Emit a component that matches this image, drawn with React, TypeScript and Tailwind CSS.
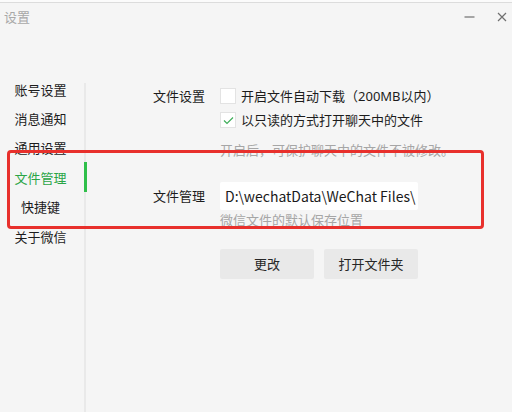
import React from "react";

const font = { fontFamily: '"Noto Sans CJK SC", "Noto Sans", sans-serif' };

const navItems = [
  { id: 1, text: "账号设置" },
  { id: 2, text: "消息通知" },
  { id: 3, text: "通用设置" },
  { id: 4, text: "文件管理", active: true },
  { id: 5, text: "快捷键" },
  { id: 6, text: "关于微信" },
];

const Checkbox: React.FC<{ checked?: boolean }> = ({ checked }) => (
  <div className="w-4 h-4 bg-white border border-[#e3e3e3] flex items-center justify-center">
    {checked && (
      <svg width="11" height="9" viewBox="0 0 11 9" fill="none">
        <path d="M1 4.5 L4 7.5 L10 1.5" stroke="#3fae5a" strokeWidth="1.2" />
      </svg>
    )}
  </div>
);

const App: React.FC = () => {
  return (
    <div
      className="relative w-[512px] h-[412px] overflow-hidden bg-[#f5f5f5] text-[#1c1c1c] text-[13px] leading-[14px]"
      style={font}
    >
      {/* window top edge */}
      <div className="h-[2px] bg-[#fbfbfb]" />
      <div className="h-px bg-[#dcdcdc]" />

      {/* title bar */}
      <div className="h-[27px] flex items-center justify-between pl-[4px] pr-[5px]">
        <span className="text-[13px] text-[#a8a8a8]">设置</span>
        <div className="flex items-center gap-[22px] text-[#707070]">
          <svg width="11" height="11" viewBox="0 0 11 11">
            <path d="M0.5 6 H10.5" stroke="currentColor" strokeWidth="1.2" />
          </svg>
          <svg width="10" height="10" viewBox="0 0 10 10">
            <path d="M1 1 L9 9 M9 1 L1 9" stroke="currentColor" strokeWidth="1.2" />
          </svg>
        </div>
      </div>

      {/* body */}
      <div className="flex pt-[45px] h-[382px]">
        <ul className="w-[81px]">
          {navItems.map((item) => (
            <li
              key={item.id}
              className={`h-[29.4px] flex items-center justify-center ${
                item.active ? "text-[#2aa546]" : ""
              }`}
            >
              {item.text}
            </li>
          ))}
        </ul>

        <div className="relative w-[6px]">
          <div className="absolute left-[3px] top-[8px] bottom-0 w-[2px] bg-[#e9e9e9]" />
          <div className="absolute left-[3px] top-[87px] h-[30px] w-[3px] bg-[#2fbf4a]" />
        </div>

        <div className="flex-1 pl-[66px] pt-[13px]">
          <div className="flex">
            <div className="w-[53px] h-4 flex items-center">文件设置</div>
            <div className="ml-[14px]">
              <div className="flex items-center gap-[5px] h-4">
                <Checkbox />
                <span>
                  开启文件自动下载（
                  <span style={{ fontFamily: '"Noto Sans", sans-serif' }}>200MB</span>
                  以内）
                </span>
              </div>
              <div className="flex items-center gap-[5px] h-4 mt-[8px]">
                <Checkbox checked />
                <span>以只读的方式打开聊天中的文件</span>
              </div>
              <div className="mt-[15px] text-[#a6a6a6]">开启后，可保护聊天中的文件不被修改。</div>
            </div>
          </div>

          <div className="flex mt-[25px]">
            <div className="w-[53px] h-[28px] flex items-center">文件管理</div>
            <div className="ml-[14px]">
              <div className="w-[198px] h-[28px] bg-white rounded-[2px] flex items-center pl-[5px] text-[14px] text-[#1a1a1a] whitespace-nowrap overflow-hidden">
                D:\wechatData\WeChat Files\
              </div>
              <div className="mt-[3px] text-[#a6a6a6]">微信文件的默认保存位置</div>
              <div className="flex gap-[10px] mt-[22px]">
                <button className="w-[94px] h-[30px] bg-[#e9e9e9] rounded-[2px] text-[13px] text-[#262626]">
                  更改
                </button>
                <button className="w-[94px] h-[30px] bg-[#e9e9e9] rounded-[2px] text-[13px] text-[#262626]">
                  打开文件夹
                </button>
              </div>
            </div>
          </div>
        </div>
      </div>

      {/* red annotation frame */}
      <div className="absolute left-[7px] top-[150px] w-[477px] h-[79px] border-[3px] border-[#e8302c] rounded-[4px]" />
    </div>
  );
};

export default App;
